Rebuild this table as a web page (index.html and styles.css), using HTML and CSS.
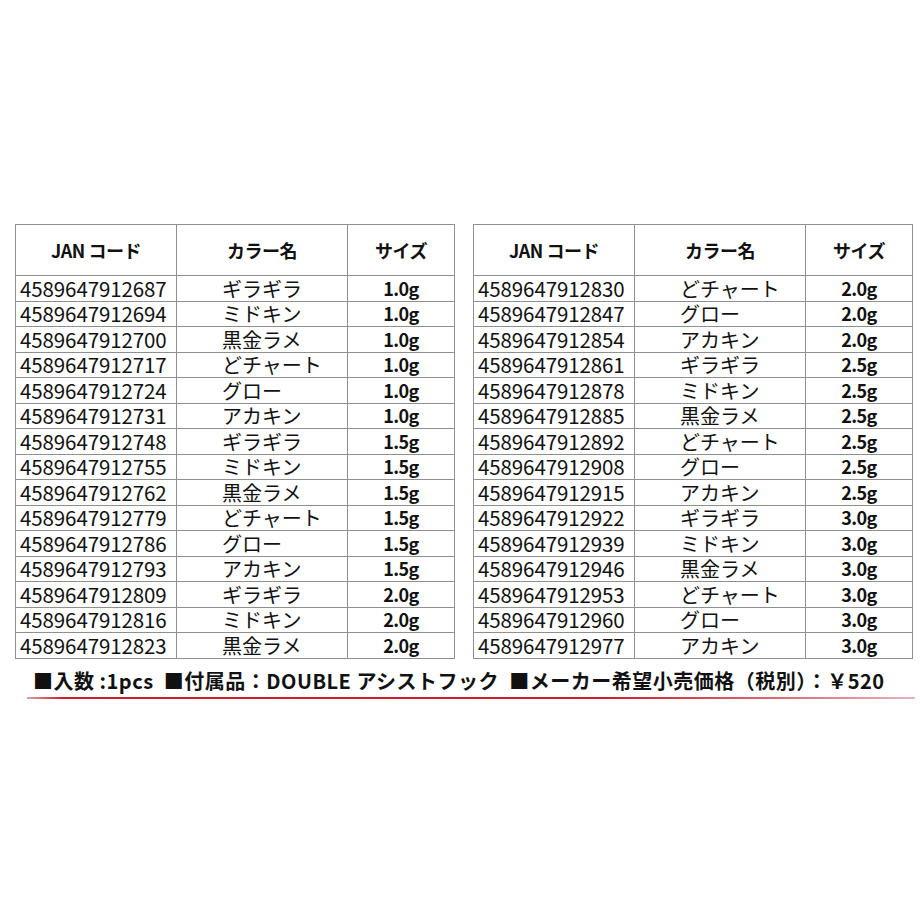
FILE: index.html
```html
<!DOCTYPE html>
<html lang="ja">
<head>
<meta charset="utf-8">
<link rel="stylesheet" href="styles.css">
</head>
<body>
<div class="page">
  <div class="tables">
    <table class="spec">
      <thead><tr><th class="c-jan">JAN コード</th><th class="c-col">カラー名</th><th class="c-size">サイズ</th></tr></thead>
      <tbody>
        <tr><td class="jan">4589647912687</td><td class="col">ギラギラ</td><td class="size">1.0g</td></tr>
        <tr><td class="jan">4589647912694</td><td class="col">ミドキン</td><td class="size">1.0g</td></tr>
        <tr><td class="jan">4589647912700</td><td class="col">黒金ラメ</td><td class="size">1.0g</td></tr>
        <tr><td class="jan">4589647912717</td><td class="col">どチャート</td><td class="size">1.0g</td></tr>
        <tr><td class="jan">4589647912724</td><td class="col">グロー</td><td class="size">1.0g</td></tr>
        <tr><td class="jan">4589647912731</td><td class="col">アカキン</td><td class="size">1.0g</td></tr>
        <tr><td class="jan">4589647912748</td><td class="col">ギラギラ</td><td class="size">1.5g</td></tr>
        <tr><td class="jan">4589647912755</td><td class="col">ミドキン</td><td class="size">1.5g</td></tr>
        <tr><td class="jan">4589647912762</td><td class="col">黒金ラメ</td><td class="size">1.5g</td></tr>
        <tr><td class="jan">4589647912779</td><td class="col">どチャート</td><td class="size">1.5g</td></tr>
        <tr><td class="jan">4589647912786</td><td class="col">グロー</td><td class="size">1.5g</td></tr>
        <tr><td class="jan">4589647912793</td><td class="col">アカキン</td><td class="size">1.5g</td></tr>
        <tr><td class="jan">4589647912809</td><td class="col">ギラギラ</td><td class="size">2.0g</td></tr>
        <tr><td class="jan">4589647912816</td><td class="col">ミドキン</td><td class="size">2.0g</td></tr>
        <tr><td class="jan">4589647912823</td><td class="col">黒金ラメ</td><td class="size">2.0g</td></tr>
      </tbody>
    </table>
    <table class="spec">
      <thead><tr><th class="c-jan">JAN コード</th><th class="c-col">カラー名</th><th class="c-size">サイズ</th></tr></thead>
      <tbody>
        <tr><td class="jan">4589647912830</td><td class="col">どチャート</td><td class="size">2.0g</td></tr>
        <tr><td class="jan">4589647912847</td><td class="col">グロー</td><td class="size">2.0g</td></tr>
        <tr><td class="jan">4589647912854</td><td class="col">アカキン</td><td class="size">2.0g</td></tr>
        <tr><td class="jan">4589647912861</td><td class="col">ギラギラ</td><td class="size">2.5g</td></tr>
        <tr><td class="jan">4589647912878</td><td class="col">ミドキン</td><td class="size">2.5g</td></tr>
        <tr><td class="jan">4589647912885</td><td class="col">黒金ラメ</td><td class="size">2.5g</td></tr>
        <tr><td class="jan">4589647912892</td><td class="col">どチャート</td><td class="size">2.5g</td></tr>
        <tr><td class="jan">4589647912908</td><td class="col">グロー</td><td class="size">2.5g</td></tr>
        <tr><td class="jan">4589647912915</td><td class="col">アカキン</td><td class="size">2.5g</td></tr>
        <tr><td class="jan">4589647912922</td><td class="col">ギラギラ</td><td class="size">3.0g</td></tr>
        <tr><td class="jan">4589647912939</td><td class="col">ミドキン</td><td class="size">3.0g</td></tr>
        <tr><td class="jan">4589647912946</td><td class="col">黒金ラメ</td><td class="size">3.0g</td></tr>
        <tr><td class="jan">4589647912953</td><td class="col">どチャート</td><td class="size">3.0g</td></tr>
        <tr><td class="jan">4589647912960</td><td class="col">グロー</td><td class="size">3.0g</td></tr>
        <tr><td class="jan">4589647912977</td><td class="col">アカキン</td><td class="size">3.0g</td></tr>
      </tbody>
    </table>
  </div>
  <p class="note">■入数 :1pcs&nbsp;&nbsp;■付属品：DOUBLE アシストフック&nbsp;&nbsp;■メーカー希望小売価格（税別）：￥520</p>
  <div class="redline"></div>
</div>
</body>
</html>
```

FILE: styles.css
```css
html, body {
  margin: 0;
  padding: 0;
  background: #ffffff;
}

.page {
  width: 920px;
  height: 920px;
  box-sizing: border-box;
  padding-top: 224px;
  font-family: "Noto Sans CJK JP", "Noto Sans", sans-serif;
  color: #111;
}

.tables {
  display: flex;
  gap: 18px;
  padding-left: 15px;
}

.spec {
  border-collapse: collapse;
  table-layout: fixed;
  width: 439px;
}

.spec th,
.spec td {
  border: 1px solid #8f8f8f;
  padding: 0;
  white-space: nowrap;
}

.spec th {
  height: 50px;
  font-size: 18px;
  font-weight: 700;
  text-align: center;
  line-height: 24px;
  letter-spacing: -0.5px;
}

.c-jan { width: 160px; }
.c-col { width: 170px; }
.c-size { width: 106px; }

.spec td {
  height: 24.5px;
  line-height: 21px;
}

.jan {
  font-size: 20.5px;
  padding-left: 4px !important;
  letter-spacing: -0.1px;
}

.col {
  font-size: 20px;
  padding-left: 45px !important;
  font-weight: 400;
}

.size {
  font-size: 18px;
  font-weight: 700;
  text-align: center;
  letter-spacing: -0.6px;
}

.note {
  margin: 10px 0 0 33px;
  font-size: 20px;
  font-weight: 700;
  line-height: 24px;
  white-space: nowrap;
  letter-spacing: 0.5px;
}

.redline {
  margin: 4px 0 0 27px;
  width: 888px;
  height: 2px;
  background: linear-gradient(90deg, #d9a0a8 0%, #c8202e 4%, #cf1e2e 40%, #c8202e 65%, #dd6b78 85%, #eab3bb 100%);
}
```
